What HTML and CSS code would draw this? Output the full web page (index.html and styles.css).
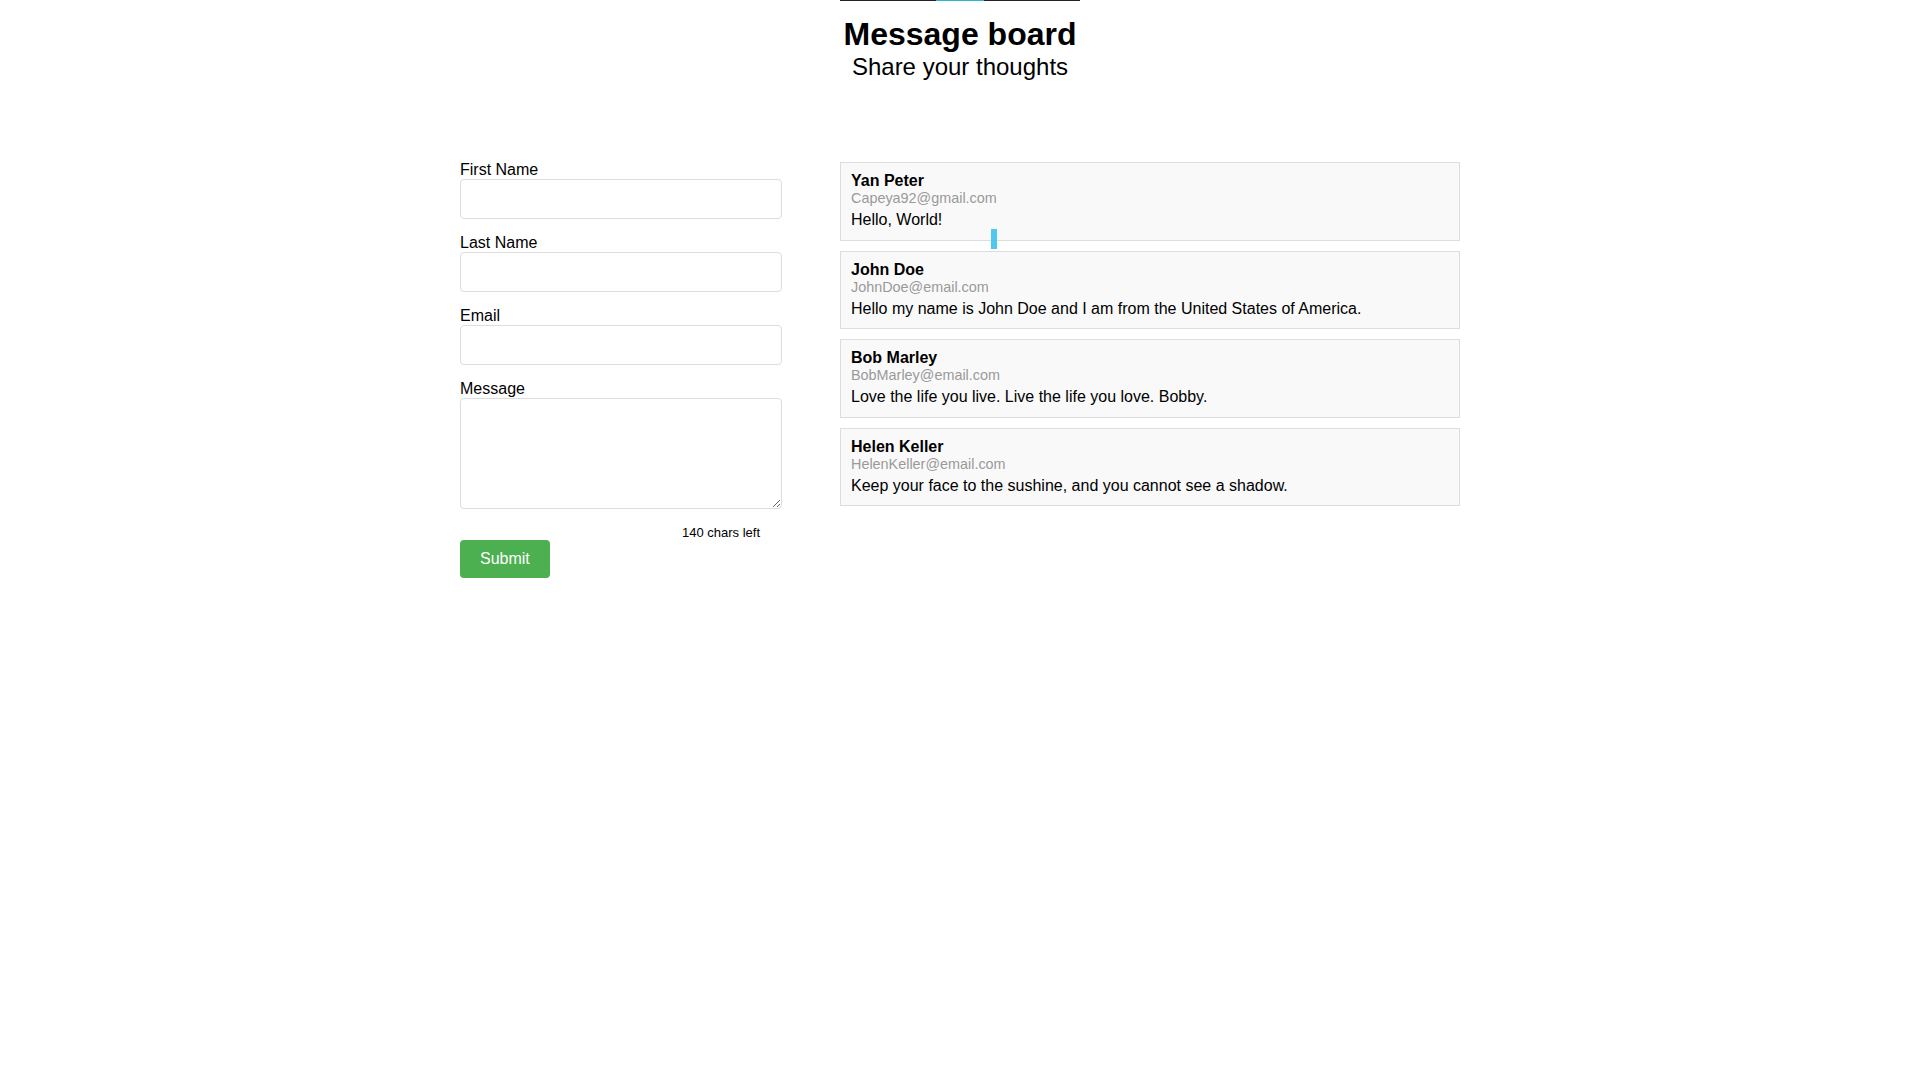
FILE: index.html
```html
<!DOCTYPE html>
<html lang="en">
<head>
<meta charset="utf-8">
<title>Message board</title>
<link rel="stylesheet" href="styles.css">
</head>
<body>
<header class="header">
  <div class="topbar"><span class="topbar-accent"></span></div>
  <h1 class="title">Message board</h1>
  <p class="subtitle">Share your thoughts</p>
</header>
<main class="board">
  <form class="form">
    <label class="label" for="first">First Name</label>
    <input class="field" id="first" type="text">
    <label class="label" for="last">Last Name</label>
    <input class="field" id="last" type="text">
    <label class="label" for="email">Email</label>
    <input class="field" id="email" type="email">
    <label class="label" for="msg">Message</label>
    <textarea class="field area" id="msg"></textarea>
    <div class="counter">140 chars left</div>
    <button class="submit" type="button">Submit</button>
  </form>
  <section class="messages">
    <article class="card">
      <div class="name">Yan Peter</div>
      <div class="mail">Capeya92@gmail.com</div>
      <div class="text">Hello, World!</div>
    </article>
    <article class="card">
      <div class="name">John Doe</div>
      <div class="mail">JohnDoe@email.com</div>
      <div class="text">Hello my name is John Doe and I am from the United States of America.</div>
    </article>
    <article class="card">
      <div class="name">Bob Marley</div>
      <div class="mail">BobMarley@email.com</div>
      <div class="text">Love the life you live. Live the life you love. Bobby.</div>
    </article>
    <article class="card">
      <div class="name">Helen Keller</div>
      <div class="mail">HelenKeller@email.com</div>
      <div class="text">Keep your face to the sushine, and you cannot see a shadow.</div>
    </article>
  </section>
</main>
<div class="caret"></div>
</body>
</html>
```
FILE: styles.css
```css
* { box-sizing: border-box; }
html, body { margin: 0; padding: 0; background: #fff; }
body {
  font-family: "Liberation Sans", Arial, sans-serif;
  color: #000;
  position: relative;
  min-height: 1080px;
}
.header {
  display: flex;
  flex-direction: column;
  align-items: center;
}
.topbar {
  width: 240px;
  height: 1px;
  background: #222;
  display: flex;
  justify-content: center;
}
.topbar-accent {
  width: 48px;
  height: 1px;
  background: #29b6d6;
}
.title {
  margin: 15px 0 0;
  font-size: 32px;
  font-weight: bold;
  line-height: normal;
}
.subtitle {
  margin: 0;
  font-size: 24px;
  line-height: normal;
}
.board {
  width: 1000px;
  margin: 80px auto 0;
  display: flex;
  justify-content: space-between;
  align-items: flex-start;
}
.form {
  width: 322px;
  display: flex;
  flex-direction: column;
}
.label {
  display: block;
  font-size: 16px;
  line-height: normal;
}
.field {
  display: block;
  width: 322px;
  height: 40px;
  margin: 0 0 15px;
  border: 1px solid #ddd;
  border-radius: 4px;
  font-family: inherit;
  font-size: 16px;
  padding: 6px 10px;
  background: #fff;
}
.area {
  height: 111px;
  resize: vertical;
}
.counter {
  font-size: 13px;
  line-height: normal;
  text-align: right;
  padding-right: 22px;
  padding-top: 1px;
}
.submit {
  align-self: flex-start;
  height: 38px;
  padding: 0 20px;
  border: none;
  border-radius: 4px;
  background: #4caf50;
  color: #fff;
  font-family: inherit;
  font-size: 16px;
}
.messages {
  width: 620px;
  padding-top: 1px;
}
.card {
  border: 1px solid #ddd;
  background: #f9f9f9;
  padding: 9px 10px 10.5px;
  margin-bottom: 10px;
}
.name {
  font-size: 16px;
  font-weight: bold;
  line-height: normal;
}
.mail {
  font-size: 14.4px;
  color: #999;
  line-height: normal;
  margin-bottom: 5px;
}
.text {
  font-size: 16px;
  line-height: normal;
}
.caret {
  position: absolute;
  left: 991px;
  top: 229px;
  width: 6px;
  height: 20px;
  background: #4fc8f0;
}
```
